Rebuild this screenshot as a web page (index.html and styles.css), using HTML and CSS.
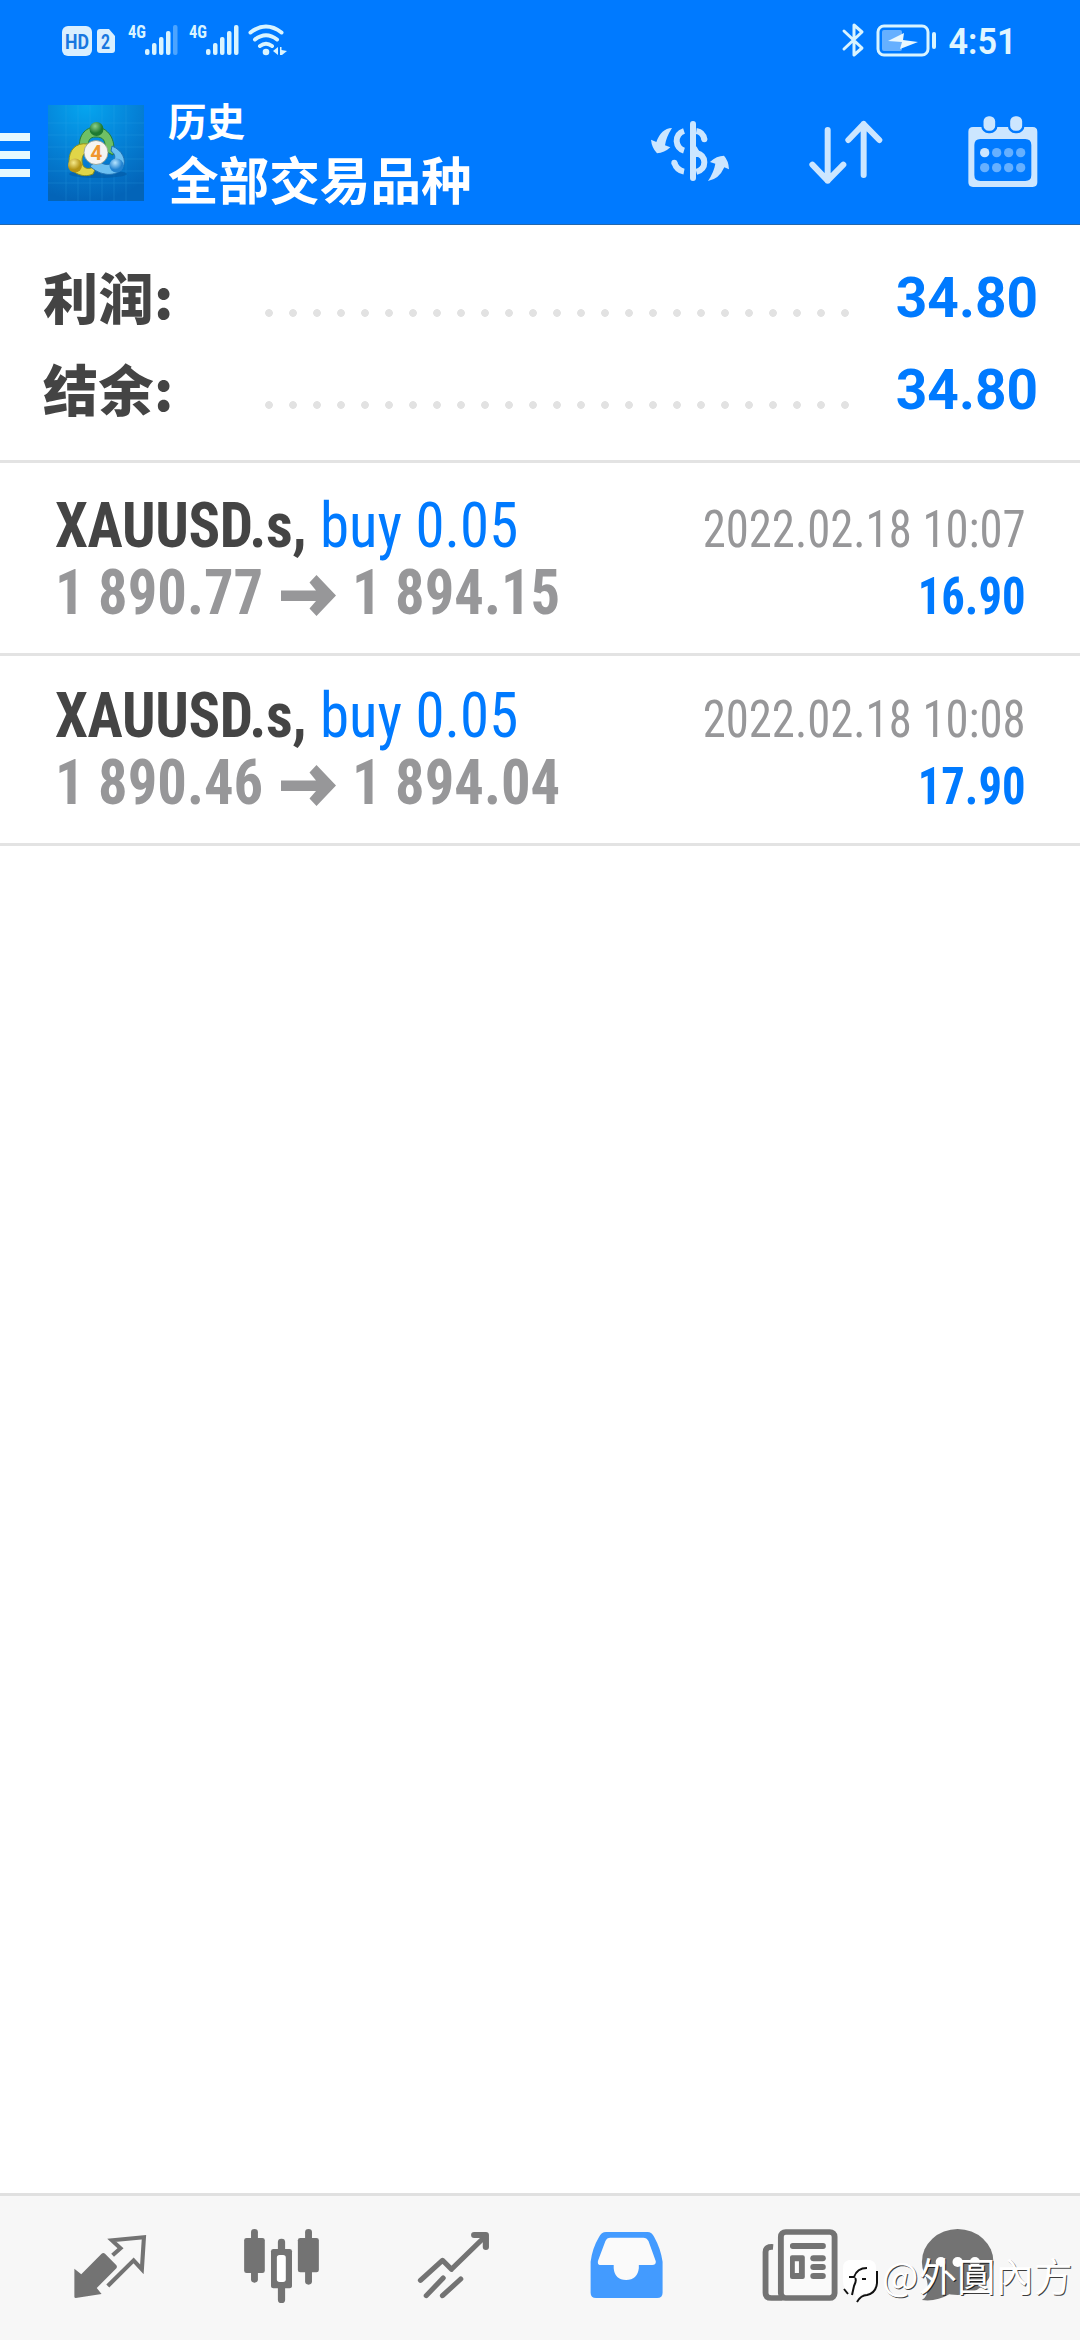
FILE: index.html
```
<!DOCTYPE html>
<html lang="zh-CN">
<head>
<meta charset="utf-8">
<title>历史</title>
<link rel="stylesheet" href="styles.css">
</head>
<body>
<div class="app">
  <header class="header">
    <div class="status">
      <svg class="status-left" width="300" height="80" viewBox="0 0 300 80">
        <rect x="62" y="26" width="30" height="30" rx="6" fill="#d9efff"/>
        <text class="badge-text" x="65" y="49" font-size="19.5" textLength="24" lengthAdjust="spacingAndGlyphs">HD</text>
        <path d="M100 29h9l6 7v14q0 3-3 3h-12q-3 0-3-3V32q0-3 3-3z" fill="#d9efff"/>
        <text class="badge-text" x="101" y="49" font-size="21" textLength="9" lengthAdjust="spacingAndGlyphs">2</text>
        <g fill="#d9f4ff">
          <text class="net" x="128" y="38" textLength="18" lengthAdjust="spacingAndGlyphs">4G</text>
          <rect x="145" y="49" width="4.500" height="6" rx="2"/><rect x="152" y="43" width="4.500" height="12" rx="2"/><rect x="159" y="37" width="4.500" height="18" rx="2"/><rect x="166" y="31" width="4.500" height="24" rx="2"/><rect x="173" y="25" width="4.500" height="30" rx="2" opacity=".35"/>
          <text class="net" x="189" y="38" textLength="18" lengthAdjust="spacingAndGlyphs">4G</text>
          <rect x="206" y="49" width="4.500" height="6" rx="2"/><rect x="213" y="43" width="4.500" height="12" rx="2"/><rect x="220" y="37" width="4.500" height="18" rx="2"/><rect x="227" y="31" width="4.500" height="24" rx="2"/><rect x="234" y="25" width="4.500" height="30" rx="2"/>
          <circle cx="266" cy="52" r="3.300"/>
          <path d="M273 51l5-4v8zM280 47h1.500v3l5.500 1-5 4h-2z"/>
        </g>
        <g fill="none" stroke="#d9f4ff" stroke-width="4" stroke-linecap="round"><path d="M250.500 32.500Q266 20.500 281.500 32.500M255 39.500Q266 31 277 39.500M260 46Q266 41.500 272 46"/></g>
      </svg>
      <svg class="status-right" width="260" height="80" viewBox="820 0 260 80">
        <g fill="none" stroke="#d9f4ff" stroke-width="3" stroke-linejoin="round" stroke-linecap="round">
          <path d="M844 31l18 17-8 7V25l8 7-18 17"/>
          <rect x="878" y="26" width="50" height="29" rx="6"/>
        </g>
        <rect x="882" y="30" width="20" height="21" rx="2" fill="#66b0ff"/>
        <path d="M888 41l16-8-1 7 15 2-18 7 2-7z" fill="#e9f8ff"/>
        <rect x="932" y="32" width="4" height="17" rx="2" fill="#d9f4ff"/>
        <text class="clock" x="948.500" y="54" textLength="68" lengthAdjust="spacingAndGlyphs">4:51</text>
      </svg>
    </div>
    <div class="toolbar">
      <svg class="menu" width="30" height="44" viewBox="0 0 30 44"><path d="M0 0h30v8H0zM0 18h30v8H0zM0 36h30v8H0z" fill="#e6f9ff"/></svg>
      <svg class="logo" width="96" height="96" viewBox="0 0 96 96">
        <defs>
          <radialGradient id="sky" cx=".4" cy="0" r="1"><stop offset="0" stop-color="#05a6f0"/><stop offset=".5" stop-color="#0583d8"/><stop offset="1" stop-color="#0364b8"/></radialGradient>
          <radialGradient id="gr" cx=".4" cy=".3"><stop offset="0" stop-color="#8dd08a"/><stop offset="1" stop-color="#1d7a32"/></radialGradient>
          <radialGradient id="ye" cx=".4" cy=".3"><stop offset="0" stop-color="#f6ea8a"/><stop offset="1" stop-color="#b59413"/></radialGradient>
          <radialGradient id="bl" cx=".4" cy=".3"><stop offset="0" stop-color="#b5e4ff"/><stop offset="1" stop-color="#2282d0"/></radialGradient>
        </defs>
        <rect width="96" height="96" fill="url(#sky)"/>
        <path d="M18 0v96M30 0v96M42 0v96M54 0v96M66 0v96M78 0v96M0 18h96M0 30h96M0 42h96M0 54h96M0 66h96M0 78h96" stroke="#3bb0ee" stroke-width=".7" opacity=".3"/>
        <ellipse cx="50" cy="69" rx="29" ry="4" fill="#024d93" opacity=".4"/>
        <path d="M32 47C29 31 37 22 48 22S69 34 65 50L57 46C58 35 55 32 48 32S40 36 40 43z" fill="#6fc065" stroke="#257d39"/>
        <path d="M40 39C27 37 21 46 21 56c0 11 13 18 24 13l4-9c-8 6-15 4-15-4s4-9 10-10z" fill="#e0d548" stroke="#8b911c"/>
        <path d="M64 41c10 4 15 14 11 21-6 11-24 9-33-1l8-6c5 6 14 6 16 0 2-4 0-7-3-9z" fill="#6cc0f2" stroke="#2273b5"/>
        <circle cx="48.500" cy="24" r="7" fill="url(#gr)"/>
        <circle cx="27" cy="60.500" r="7" fill="url(#ye)"/>
        <circle cx="68.500" cy="60.500" r="7" fill="url(#bl)"/>
        <circle cx="48" cy="47.500" r="12" fill="#f5f4f2" stroke="#8f9a8a" stroke-width=".8"/>
        <text class="four" x="48.300" y="55">4</text>
      </svg>
      <div class="titles"><div class="screen">历史</div><div class="filter">全部交易品种</div></div>
      <svg class="tool" width="80" height="73.300" viewBox="90 105 240 220">
        <path d="M156 144Q123 146 109 186L93 179Q95 203 111 220Q133 219 151 202L135 196Q138 172 156 144Z" fill="#cce6ff"/>
        <path d="M264 303Q297 298 313 262L327 268Q326 242 312 227Q290 227 270 246L286 251Q282 276 264 303Z" fill="#cce6ff"/>
        <path d="M192 153Q170 160 170 184Q172 206 192 212M163 248Q170 271 192 275M229 153Q249 156 253 178M229 219Q253 225 253 247T229 276" fill="none" stroke="#cce6ff" stroke-width="18"/>
        <circle cx="253" cy="178" r="9" fill="#cce6ff"/><circle cx="163" cy="248" r="9" fill="#cce6ff"/>
        <path d="M219 132V294M223 206L232 222" stroke="#cce6ff" stroke-width="18" stroke-linecap="round"/>
      </svg>
      <svg class="tool sort" width="75" height="73.300" viewBox="565 105 225 220">
        <path d="M624 150V302M578 254L624 302L671 254M732 285V132M686 180L732 132L779 180" fill="none" stroke="#cce6ff" stroke-width="18" stroke-linecap="round" stroke-linejoin="round"/>
      </svg>
      <svg class="tool cal" width="71.700" height="73.300" viewBox="1040 105 215 220">
        <path fill-rule="evenodd" d="M1058 141H1237Q1251 141 1251 155V307Q1251 321 1237 321H1058Q1044 321 1044 307V155Q1044 141 1058 141ZM1080 177Q1062 177 1062 195V285Q1062 303 1080 303H1215Q1233 303 1233 285V195Q1233 177 1215 177Z" fill="#cce6ff"/>
        <rect x="1086" y="105" width="42" height="51" rx="19" fill="#cce6ff" stroke="#007aff" stroke-width="7"/>
        <rect x="1166" y="105" width="43" height="51" rx="19" fill="#cce6ff" stroke="#007aff" stroke-width="7"/>
        <circle cx="1093" cy="218" r="14" fill="#cce6ff"/>
        <g fill="#66b0ff"><circle cx="1129" cy="218" r="14"/><circle cx="1165" cy="218" r="14"/><circle cx="1201" cy="218" r="14"/><circle cx="1093" cy="263" r="14"/><circle cx="1129" cy="263" r="14"/><circle cx="1165" cy="263" r="14"/><circle cx="1201" cy="263" r="14"/></g>
      </svg>
    </div>
  </header>
  <main class="content">
    <section class="summary">
      <div class="sum-row"><span class="sum-label">利润:</span><span class="leader"></span><span class="sum-value">34.80</span></div>
      <div class="sum-row"><span class="sum-label">结余:</span><span class="leader"></span><span class="sum-value">34.80</span></div>
    </section>
    <article class="deal">
      <div class="deal-main">
        <div class="deal-name"><b>XAUUSD.s,</b> <span class="side">buy 0.05</span></div>
        <div class="deal-prices"><span class="price">1 890.77</span><svg class="arrow" width="55" height="41" viewBox="0 0 55 41"><path d="M0 15.500H35L28.500 7.500 35.500 0 55 20.500 35.500 41 28.500 33.500 35 26H0z" fill="#979799"/></svg><span class="price">1 894.15</span></div>
      </div>
      <div class="deal-side"><div class="time">2022.02.18 10:07</div><div class="profit">16.90</div></div>
    </article>
    <article class="deal">
      <div class="deal-main">
        <div class="deal-name"><b>XAUUSD.s,</b> <span class="side">buy 0.05</span></div>
        <div class="deal-prices"><span class="price">1 890.46</span><svg class="arrow" width="55" height="41" viewBox="0 0 55 41"><path d="M0 15.500H35L28.500 7.500 35.500 0 55 20.500 35.500 41 28.500 33.500 35 26H0z" fill="#979799"/></svg><span class="price">1 894.04</span></div>
      </div>
      <div class="deal-side"><div class="time">2022.02.18 10:08</div><div class="profit">17.90</div></div>
    </article>
  </main>
  <nav class="tabs">
    <svg class="tab" viewBox="69.700 48 499.500 432" preserveAspectRatio="none">
      <path d="M216 266L236 283L295 221Q300 217 305 221L338 256Q341 260 338 265L281 324L295 342L220 354Q216 354 216 350Z" fill="#737373"/>
      <path d="M327 226L350 205L325 181L418 172L412 268L388 241L313 318" fill="none" stroke="#737373" stroke-width="12"/>
    </svg>
    <svg class="tab" viewBox="569.200 48 499.500 432" preserveAspectRatio="none" fill="#737373">
      <rect x="729" y="147" width="20" height="161" rx="10"/><rect x="709" y="174" width="60" height="105" rx="7"/>
      <rect x="807" y="176" width="21" height="193" rx="10"/><rect x="787" y="207" width="61" height="118" rx="7"/><rect x="804" y="225" width="26" height="81" rx="8" fill="#fff"/>
      <rect x="886" y="147" width="20" height="167" rx="10"/><rect x="865" y="174" width="61" height="103" rx="7"/>
    </svg>
    <svg class="tab" viewBox="1068.700 48 499.500 432" preserveAspectRatio="none">
      <g fill="none" stroke="#737373" stroke-linecap="round" stroke-linejoin="round"><path d="M1221 301L1285 241L1311 268L1408 170M1238 347L1287 294M1285 347L1338 297" stroke-width="15"/><path d="M1377 165H1411V201" stroke-width="18"/></g>
    </svg>
    <svg class="tab" viewBox="0 48 499.500 432" preserveAspectRatio="none">
      <path d="M204 173H300Q310 173 315 183L336 243Q338 255 326 255H287V265Q283 300 250 300Q217 300 214 265V255H177Q165 255 169 241L190 183Q194 173 204 173Z" fill="#fafafa"/>
      <path fill-rule="evenodd" fill="#439bff" d="M192 156H312Q325 156 332 172Q350 205 356 245V338Q356 354 340 354H163Q147 354 147 338V245Q152 205 171 172Q178 156 192 156ZM204 173Q194 173 190 183L169 241Q165 255 177 255H214V265Q217 300 250 300Q283 300 287 265V255H326Q338 255 336 243L315 183Q310 173 300 173Z"/>
    </svg>
    <svg class="tab" viewBox="499.500 48 499.500 432" preserveAspectRatio="none" fill="#737373">
      <rect x="699.500" y="156" width="156" height="198" rx="14" fill="#fafafa" stroke="#737373" stroke-width="17"/>
      <path d="M677 201Q655 199 655 216V338Q655 354 672 354H704" fill="none" stroke="#737373" stroke-width="17"/>
      <rect x="726" y="189" width="104" height="18" rx="8"/>
      <path fill-rule="evenodd" d="M732 226H763Q769 226 769 232V291Q769 297 763 297H732Q726 297 726 291V232Q726 226 732 226ZM740 244V279H752V244Z"/>
      <rect x="785" y="226" width="45" height="18" rx="9"/><rect x="785" y="252" width="45" height="18" rx="9"/><rect x="785" y="279" width="45" height="18" rx="9"/>
    </svg>
    <svg class="tab" viewBox="999 48 499.500 432" preserveAspectRatio="none">
      <ellipse cx="1213" cy="246" rx="104" ry="99" fill="#737373"/><path d="M1112 265Q1142 340 1109 360Q1150 366 1190 342Z" fill="#737373"/>
      <g fill="#fff"><circle cx="1164" cy="246" r="15"/><circle cx="1213" cy="246" r="15"/><circle cx="1263" cy="246" r="15"/></g>
    </svg>
  </nav>
  <div class="mark">
    <svg width="36" height="46" viewBox="0 0 36 46"><path d="M7 1h21q6 1 6 8v15q-1 9-10 10-6 0-10 7l-1-7Q1 34 1 22V9Q1 2 7 1z" fill="#fff"/><path d="M35 12v12q-1 10-10 12-6 0-10 7M7 18h5q3-9 13-9M13 19q2 2-1 8l-2 9M20 20h4M2 30l4 5" fill="none" stroke="#111" stroke-width="2"/></svg>
    <span>@外圓內方</span>
  </div>
</div>
</body>
</html>
```
FILE: styles.css
```
body { margin: 0; background: #fff; }
svg { display: block; flex: none; }
.app {
  position: relative;
  width: 1080px;
  height: 2340px;
  display: flex;
  flex-direction: column;
  overflow: hidden;
  font-family: Roboto, "Noto Sans CJK SC", sans-serif;
}

/* header */
.header { height: 225px; box-sizing: border-box; background: #007aff; border-bottom: 1px solid #2468ad; }
.status { height: 80px; display: flex; justify-content: space-between; }
.badge-text { font-weight: 700; fill: #1877e0; }
.net { font-size: 19px; font-weight: 700; font-family: "Roboto Condensed", sans-serif; }
.clock { font-size: 36px; font-weight: 600; fill: #e0f6ff; }
.toolbar { height: 145px; display: flex; align-items: center; }
.menu { margin-top: 5px; }
.logo { margin-left: 18px; margin-top: 1px; }
.four { font-size: 21px; font-weight: 700; text-anchor: middle; fill: #f0962e; }
.titles { margin-left: 24px; width: 482px; margin-top: -8px; color: #fff; font-family: "Noto Sans CJK SC", sans-serif; font-weight: 700; line-height: 59px; white-space: nowrap; }
.screen { font-size: 38.500px; }
.filter { font-size: 50.600px; }
.tool { margin-top: -2px; }
.sort { margin-left: 78.300px; }
.cal { margin-left: 83.400px; }

/* totals */
.content { flex: 1; }
.summary { height: 238px; box-sizing: border-box; margin-bottom: 3px; padding: 24px 42px 0 43px; border-bottom: 3px solid #e3e3e3; }
.sum-row { height: 92px; display: flex; align-items: center; }
.sum-label { width: 214px; font: 900 55px/92px "Noto Sans CJK SC", sans-serif; letter-spacing: .5px; color: #444; }
.leader { width: 600px; height: 8px; margin-top: 36px; background: radial-gradient(circle at 12px 4px, #e2e2e2 3.500px, transparent 4.200px) 0 0 / 24px 8px repeat-x; }
.sum-value { flex: 1; text-align: right; font-size: 55px; font-weight: 700; line-height: 92px; padding-top: 6px; color: #007aff; }

/* deals */
.deal { height: 190px; box-sizing: border-box; padding: 26px 54px 0 55px; border-bottom: 3px solid #e3e3e3; display: flex; justify-content: space-between; font-family: "Roboto Condensed", Roboto, sans-serif; line-height: 67px; white-space: nowrap; }
.deal-main { font-size: 63px; }
.deal-name { color: #444; transform: scaleX(.935); transform-origin: 0 0; }
.deal-name b { letter-spacing: -.4px; }
.side { color: #007aff; }
.deal-prices { display: flex; align-items: center; color: #979799; font-weight: 700; }
.price { width: 226px; transform: scaleX(.93); transform-origin: 0 0; }
.arrow { margin-right: 16px; margin-top: 6px; }
.deal-side { padding-top: 4px; font-size: 52px; text-align: right; }
.time { color: #979799; transform: scaleX(.898); transform-origin: 100% 0; }
.profit { color: #007aff; font-weight: 700; transform: scaleX(.897); transform-origin: 100% 0; }

/* bottom tabs */
.tabs { height: 147px; box-sizing: border-box; border-top: 3px solid #e0e0e0; background: #f7f7f7; padding-left: 24px; display: flex; }
.tab { width: 172px; height: 144px; }

/* floating signature */
.mark { position: absolute; left: 842px; top: 2259px; display: flex; align-items: flex-start; gap: 4px; color: #fff; font: 400 38.500px/38px "Noto Sans CJK TC", sans-serif; text-shadow: 1px 1px 0 rgba(0,0,0,.75); white-space: nowrap; }
.mark span { margin-top: -4px; }
```
